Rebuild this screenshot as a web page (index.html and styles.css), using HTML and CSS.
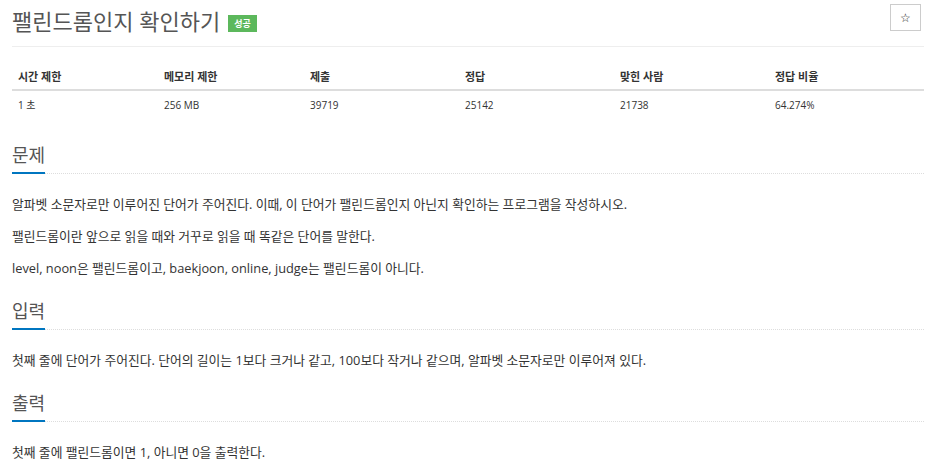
FILE: index.html
```html
<!DOCTYPE html>
<html lang="ko">
<head>
<meta charset="utf-8">
<link rel="stylesheet" href="styles.css">
</head>
<body>
<div class="page">
  <div class="header">
    <h1 class="title"><span class="title-text">팰린드롬인지 확인하기</span><span class="badge">성공</span></h1>
    <button class="star">☆</button>
  </div>
  <table class="info">
    <thead>
      <tr><th class="c-narrow">시간 제한</th><th class="c-narrow">메모리 제한</th><th>제출</th><th>정답</th><th>맞힌 사람</th><th>정답 비율</th></tr>
    </thead>
    <tbody>
      <tr><td>1 초</td><td>256 MB</td><td>39719</td><td>25142</td><td>21738</td><td>64.274%</td></tr>
    </tbody>
  </table>
  <section class="sec">
    <h2 class="sec-head"><span>문제</span></h2>
    <div class="sec-body">
      <p>알파벳 소문자로만 이루어진 단어가 주어진다. 이때, 이 단어가 팰린드롬인지 아닌지 확인하는 프로그램을 작성하시오.</p>
      <p>팰린드롬이란 앞으로 읽을 때와 거꾸로 읽을 때 똑같은 단어를 말한다.</p>
      <p>level, noon은 팰린드롬이고, baekjoon, online, judge는 팰린드롬이 아니다.</p>
    </div>
  </section>
  <section class="sec">
    <h2 class="sec-head"><span>입력</span></h2>
    <div class="sec-body">
      <p>첫째 줄에 단어가 주어진다. 단어의 길이는 1보다 크거나 같고, 100보다 작거나 같으며, 알파벳 소문자로만 이루어져 있다.</p>
    </div>
  </section>
  <section class="sec">
    <h2 class="sec-head"><span>출력</span></h2>
    <div class="sec-body">
      <p>첫째 줄에 팰린드롬이면 1, 아니면 0을 출력한다.</p>
    </div>
  </section>
</div>
</body>
</html>
```
FILE: styles.css
```css
* { box-sizing: border-box; }
html, body { margin: 0; padding: 0; background: #fff; }
body {
  font-family: "Open Sans", "Noto Sans CJK KR", sans-serif;
  color: #333;
  font-size: 13px;
}
.page { padding: 0 4px 0 12px; }
.header {
  display: flex;
  justify-content: space-between;
  align-items: flex-start;
  border-bottom: 1px solid #eee;
  padding-top: 4px;
  height: 47px;
}
.title {
  margin: 0;
  font-weight: 400;
  font-size: 22px;
  line-height: 34px;
  color: #555;
  display: flex;
  align-items: center;
}
.badge {
  display: inline-block;
  background: #5cb85c;
  color: #fff;
  font-size: 9px;
  font-weight: 700;
  line-height: 17px;
  padding: 0 6px;
  margin-left: 8px;
  margin-top: 4px;
}
.star {
  width: 31px;
  height: 27px;
  background: #fff;
  border: 1px solid #ccc;
  font-size: 12px;
  color: #222;
  padding: 0;
  margin-right: 3px;
  font-family: "DejaVu Sans", sans-serif;
}
.info {
  width: 100%;
  border-collapse: collapse;
  table-layout: fixed;
  margin-top: 15px;
  font-size: 10px;
}
.info th {
  text-align: left;
  font-weight: 700;
  font-size: 11px;
  padding: 0 6px;
  border-bottom: 2px solid #ddd;
  color: #333;
  height: 28px;
  width: 155px;
}
.info th.c-narrow { width: 146px; }
.info td {
  padding: 0 6px;
  height: 28px;
  color: #333;
}
.sec { margin-top: 25px; }
.sec + .sec { margin-top: 21px; }
.sec-head {
  margin: 0;
  font-weight: 400;
  font-size: 18px;
  line-height: 24px;
  color: #555;
  border-bottom: 1px dotted #ddd;
}
.sec-head span {
  display: inline-block;
  border-bottom: 2px solid #0076c0;
  padding-bottom: 5px;
  margin-bottom: -1px;
}
.sec-body { padding-top: 20px; }
.sec-body p {
  margin: 0 0 12px;
  font-size: 12.8px;
  line-height: 20px;
  color: #333;
}
```
